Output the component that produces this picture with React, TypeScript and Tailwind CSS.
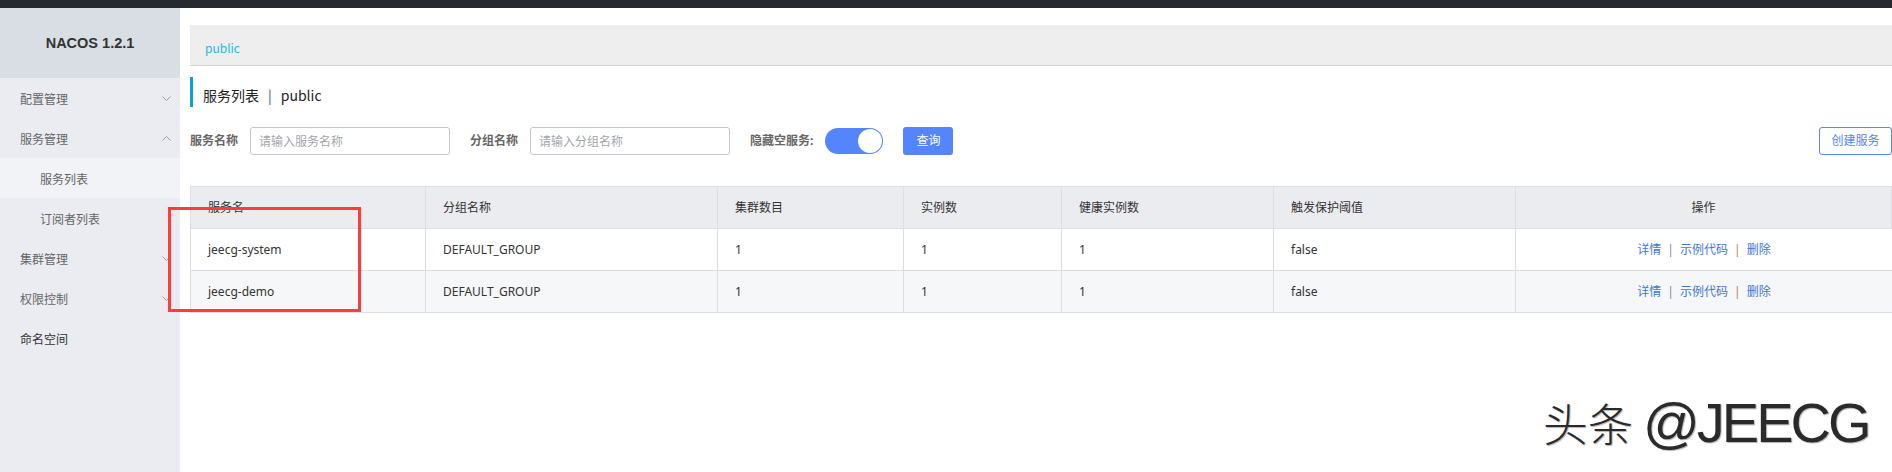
import React from 'react';

const menu = [
  { label: '配置管理', arrow: 'down' },
  { label: '服务管理', arrow: 'up' },
  { label: '服务列表', sub: true, active: true },
  { label: '订阅者列表', sub: true },
  { label: '集群管理', arrow: 'down' },
  { label: '权限控制', arrow: 'down' },
  { label: '命名空间', dark: true },
];

const columns = ['服务名', '分组名称', '集群数目', '实例数', '健康实例数', '触发保护阈值', '操作'];

const rows = [
  { name: 'jeecg-system', group: 'DEFAULT_GROUP', clusters: 1, instances: 1, healthy: 1, threshold: 'false' },
  { name: 'jeecg-demo', group: 'DEFAULT_GROUP', clusters: 1, instances: 1, healthy: 1, threshold: 'false' },
];

function Chevron({ up }: { up?: boolean }) {
  return (
    <svg width="9" height="5" viewBox="0 0 9 5" className="absolute left-[162px] top-[18px]">
      <polyline
        points={up ? '0.5,4.5 4.5,0.5 8.5,4.5' : '0.5,0.5 4.5,4.5 8.5,0.5'}
        fill="none"
        stroke="#9a9ca3"
        strokeWidth="1"
      />
    </svg>
  );
}

function Sidebar() {
  return (
    <aside className="w-[180px] shrink-0 flex flex-col bg-[#eaecf1]">
      <div className="h-[70px] bg-[#d9dde4] flex items-center justify-center text-[14.5px] font-bold text-[#333] font-['Liberation_Sans',sans-serif]">
        NACOS 1.2.1
      </div>
      <nav className="flex flex-col">
        {menu.map((item) => (
          <div
            key={item.label}
            className={`relative h-[40px] flex items-center pt-[3px] text-[12px] ${item.sub ? 'pl-[40px]' : 'pl-[20px]'} ${
              item.active ? 'bg-[#f2f3f7]' : ''
            } ${item.dark ? 'text-[#333]' : 'text-[#666]'}`}
          >
            {item.label}
            {item.arrow && <Chevron up={item.arrow === 'up'} />}
          </div>
        ))}
      </nav>
    </aside>
  );
}

function Toolbar() {
  return (
    <div className="mt-[20px] h-[28px] flex items-center text-[12px]">
      <span className="font-bold text-[#666] mr-[12px]">服务名称</span>
      <input
        className="w-[200px] h-[28px] border border-[#c4c6cf] rounded-[3px] px-[8px] text-[12px] outline-none placeholder:text-[#a3a6ad] mr-[20px]"
        placeholder="请输入服务名称"
      />
      <span className="font-bold text-[#666] mr-[12px]">分组名称</span>
      <input
        className="w-[200px] h-[28px] border border-[#c4c6cf] rounded-[3px] px-[8px] text-[12px] outline-none placeholder:text-[#a3a6ad] mr-[20px]"
        placeholder="请输入分组名称"
      />
      <span className="font-bold text-[#666] mr-[12px]">隐藏空服务:</span>
      <div className="w-[58px] h-[26px] rounded-full bg-[#5584ff] flex items-center justify-end pr-[1px] mr-[20px]">
        <div className="w-[24px] h-[24px] rounded-full bg-white" />
      </div>
      <button className="w-[50px] h-[28px] rounded-[3px] bg-[#5584ff] text-white text-[12px]">查询</button>
      <button className="ml-auto w-[73px] h-[28px] rounded-[3px] border border-[#5584ff] bg-white text-[#5584ff] text-[12px]">
        创建服务
      </button>
    </div>
  );
}

const grid = 'grid grid-cols-[235px_292px_186px_158px_212px_242px_1fr]';

function ServiceTable() {
  return (
    <div className="mt-[31px] border-t border-l border-[#dcdee3] text-[12px] text-[#333]">
      <div className={`${grid} h-[42px] bg-[#ebecf0] border-b border-[#dcdee3]`}>
        {columns.map((c, i) => (
          <div
            key={c}
            className={`flex items-center border-r border-[#dcdee3] ${i === columns.length - 1 ? 'justify-center' : 'pl-[17px]'}`}
          >
            {c}
          </div>
        ))}
      </div>
      {rows.map((r, idx) => (
        <div
          key={r.name}
          className={`${grid} h-[42px] border-b border-[#dcdee3] ${idx % 2 === 1 ? 'bg-[#f6f7f9]' : 'bg-white'}`}
        >
          <div className="flex items-center pl-[17px] border-r border-[#dcdee3]">{r.name}</div>
          <div className="flex items-center pl-[17px] border-r border-[#dcdee3]">{r.group}</div>
          <div className="flex items-center pl-[17px] border-r border-[#dcdee3]">{r.clusters}</div>
          <div className="flex items-center pl-[17px] border-r border-[#dcdee3]">{r.instances}</div>
          <div className="flex items-center pl-[17px] border-r border-[#dcdee3]">{r.healthy}</div>
          <div className="flex items-center pl-[17px] border-r border-[#dcdee3]">{r.threshold}</div>
          <div className="flex items-center justify-center text-[#3d78d8]">
            <span>详情</span>
            <span className="mx-[6px] text-[#7a86a8]">|</span>
            <span>示例代码</span>
            <span className="mx-[6px] text-[#b08a4a]">|</span>
            <span>删除</span>
          </div>
        </div>
      ))}
    </div>
  );
}

export default function App() {
  return (
    <div className="relative h-[472px] w-full flex flex-col overflow-hidden bg-white font-['Noto_Sans','Noto_Sans_CJK_SC',sans-serif] leading-none">
      <div className="h-[8px] bg-[#262a2f] shrink-0" />
      <div className="flex flex-1">
        <Sidebar />
        <main className="flex-1 pl-[10px]">
          <div className="mt-[17px] h-[41px] bg-[#eeeeee] border-b border-[#cfcfcf] flex items-center pl-[15px] pt-[5px] text-[12px] text-[#2fb5df] font-['Noto_Sans_CJK_SC',sans-serif]">
            public
          </div>
          <div className="mt-[11px] h-[30px] border-l-[3px] border-[#119fd6] pl-[10px] pt-[5px] flex items-center text-[14px] text-[#222] font-['Noto_Sans_CJK_SC',sans-serif]">
            <span>服务列表</span>
            <span className="mx-[9px] text-[#555]">|</span>
            <span>public</span>
          </div>
          <Toolbar />
          <ServiceTable />
        </main>
      </div>

      {/* annotation drawn over the screenshot */}
      <div className="absolute left-[168px] top-[207px] w-[193px] h-[105px] border-[3px] border-[#ff3b3b] pointer-events-none" />

      {/* watermark */}
      <div className="absolute left-[1543px] top-[395px] flex items-baseline text-[#2a2a2a] [text-shadow:1px_1px_1px_rgba(0,0,0,0.3),-1px_-1px_0_rgba(255,255,255,0.9)]">
        <span className="text-[45px] font-['Noto_Sans_CJK_SC',sans-serif] font-light">头条</span>
        <span className="ml-[10px] text-[56px] font-['Liberation_Sans',sans-serif] font-light tracking-[-3px]">@JEECG</span>
      </div>
    </div>
  );
}
